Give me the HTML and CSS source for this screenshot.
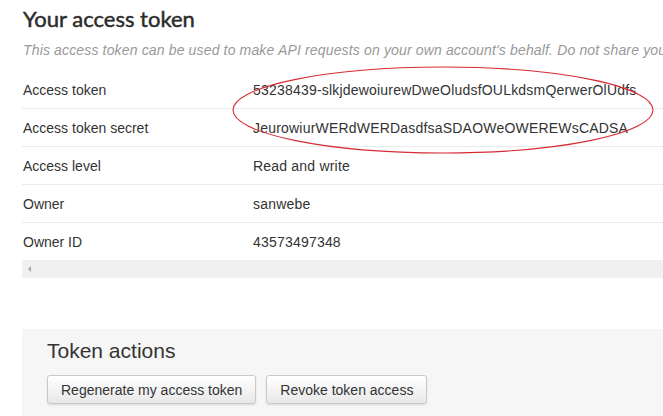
FILE: index.html
```html
<!doctype html>
<html lang="en-US">

<head>
    <meta charset="utf-8" />
    <title>Your access token</title>

    <link rel="stylesheet" href="styles.css">
</head>

<body>
    <div class="page">
        <h1 class="title">Your access token</h1>
        <p class="desc">This access token can be used to make API requests on your own account's behalf. Do not share your access token secret with anyone.</p>

        <div class="details">
            <table class="token-table">
                <tr>
                    <td class="label">Access token</td>
                    <td class="value">53238439-slkjdewoiurewDweOludsfOULkdsmQerwerOlUdfs</td>
                </tr>
                <tr>
                    <td class="label">Access token secret</td>
                    <td class="value">JeurowiurWERdWERDasdfsaSDAOWeOWEREWsCADSA</td>
                </tr>
                <tr>
                    <td class="label">Access level</td>
                    <td class="value">Read and write</td>
                </tr>
                <tr>
                    <td class="label">Owner</td>
                    <td class="value">sanwebe</td>
                </tr>
                <tr>
                    <td class="label">Owner ID</td>
                    <td class="value">43573497348</td>
                </tr>
            </table>
            <div class="hscroll"><span class="arrow"></span></div>
        </div>

        <div class="actions">
            <h2>Token actions</h2>
            <div class="buttons">
                <button class="btn">Regenerate my access token</button>
                <button class="btn">Revoke token access</button>
            </div>
        </div>

        <svg class="marker" width="663" height="200" viewBox="0 0 663 200">
            <ellipse cx="443" cy="110" rx="210" ry="43" fill="none" stroke="#d62b34" stroke-width="1.1" />
        </svg>
    </div>
</body>

</html>
```

FILE: styles.css
```css
html, body {
    margin: 0;
    overflow: hidden;
    background: #fff;
}

body {
    font-family: "Liberation Sans", Arial, sans-serif;
    color: #333;
}

.page {
    position: relative;
    padding: 4px 0 0 22px;
    height: 412px;
}

.title {
    margin: 0 0 0 1px;
    font-family: Lato, sans-serif;
    font-weight: 400;
    font-size: 22px;
    line-height: 30px;
    color: #2b2b2b;
    -webkit-text-stroke: 0.45px #2b2b2b;
}

.desc {
    margin: 6px 0 0 1px;
    font-size: 14px;
    line-height: 20px;
    font-style: italic;
    letter-spacing: 0.15px;
    color: #999;
    white-space: nowrap;
}

.details {
    margin-top: 11px;
}

.token-table {
    border-collapse: collapse;
    width: 700px;
    font-size: 14px;
}

.token-table td {
    height: 37px;
    padding: 0 1px;
    line-height: 16px;
    vertical-align: middle;
    border-bottom: 1px solid #ebebeb;
    white-space: nowrap;
}

.token-table tr:last-child td {
    border-bottom: none;
}

.token-table td.label {
    width: 228px;
}

.token-table td.value {
    letter-spacing: 0.2px;
}

.hscroll {
    height: 18px;
    background: #f0f0f0;
    display: flex;
    align-items: center;
}

.arrow {
    margin-left: 6px;
    width: 0;
    height: 0;
    border-top: 3px solid transparent;
    border-bottom: 3px solid transparent;
    border-right: 3px solid #a3a3a3;
}

.actions {
    margin-top: 51px;
    background: #f6f6f6;
    padding: 10px 25px 30px;
}

.actions h2 {
    margin: 0;
    font-size: 21px;
    line-height: 24px;
    font-weight: normal;
    color: #333;
}

.buttons {
    margin-top: 12px;
    display: flex;
    gap: 10px;
}

.btn {
    height: 29px;
    padding: 0 13px;
    font-family: "Liberation Sans", Arial, sans-serif;
    font-size: 14px;
    color: #333;
    background: linear-gradient(#ffffff, #e8e8e8);
    border: 1px solid #c9c9c9;
    border-radius: 3px;
    box-shadow: 0 1px 2px rgba(0, 0, 0, 0.12);
}

.marker {
    position: absolute;
    left: 0;
    top: 0;
    pointer-events: none;
}
```
